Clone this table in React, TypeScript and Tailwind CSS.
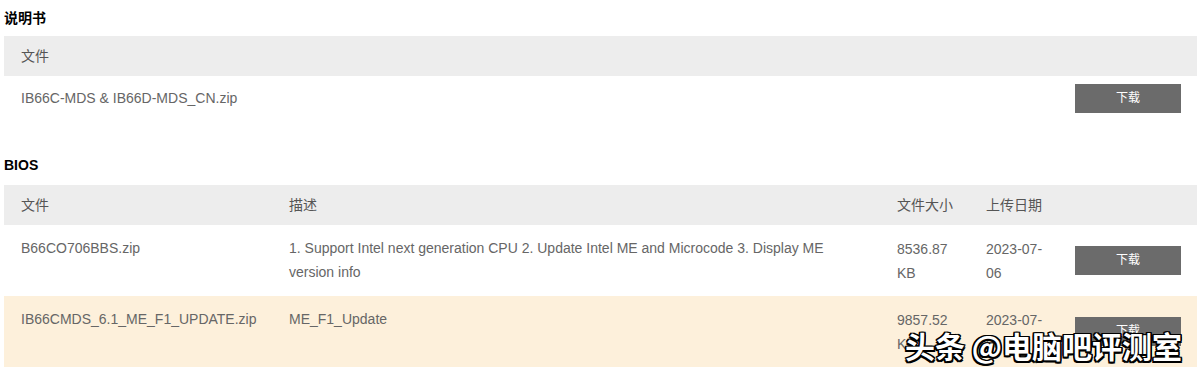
const font = { fontFamily: '"Liberation Sans", Arial, "Noto Sans CJK SC", sans-serif' }

function DownloadButton() {
  return (
    <button className="w-[106px] h-[29px] bg-[#6b6b6b] text-white text-[12px] leading-[29px]">下载</button>
  )
}

interface BiosRow {
  file: string
  desc: string
  size: string
  date: string
  highlight?: boolean
}

const biosRows: BiosRow[] = [
  {
    file: 'B66CO706BBS.zip',
    desc: '1. Support Intel next generation CPU 2. Update Intel ME and Microcode 3. Display ME version info',
    size: '8536.87 KB',
    date: '2023-07-06',
  },
  {
    file: 'IB66CMDS_6.1_ME_F1_UPDATE.zip',
    desc: 'ME_F1_Update',
    size: '9857.52 KB',
    date: '2023-07-06',
    highlight: true,
  },
]

const cols = 'grid grid-cols-[268px_608px_89px_89px_1fr]'

export default function App() {
  return (
    <div className="relative w-[1200px] h-[372px] overflow-hidden bg-white text-[14px] text-[#666]" style={font}>
      <div className="pl-[4px] pr-[3px]">
        <h2 className="pt-[9px] h-[36px] text-[14px] leading-[18px] font-bold text-black">说明书</h2>
        <div className="flex items-center h-[40px] bg-[#ededed] px-[17px] text-[#555]">文件</div>
        <div className="flex items-center h-[44px]">
          <div className="flex-1 px-[17px] leading-[24px]">IB66C-MDS &amp; IB66D-MDS_CN.zip</div>
          <div className="w-[139px] pl-[17px]">
            <DownloadButton />
          </div>
        </div>

        <h2 className="pt-[36px] h-[65px] text-[14px] leading-[18px] font-bold text-black">BIOS</h2>
        <div className={`${cols} h-[40px] items-center bg-[#ededed] text-[#555] whitespace-nowrap`}>
          <div className="pl-[17px]">文件</div>
          <div className="pl-[17px]">描述</div>
          <div className="pl-[17px]">文件大小</div>
          <div className="pl-[17px]">上传日期</div>
          <div />
        </div>
        {biosRows.map((r, i) => (
          <div
            key={i}
            className={`${cols} items-center h-[71px] leading-[24px] ${r.highlight ? 'bg-[#fdf0db]' : ''}`}
          >
            <div className="px-[17px] self-start pt-[11px]">{r.file}</div>
            <div className="px-[17px] self-start pt-[11px]">{r.desc}</div>
            <div className="pl-[17px] whitespace-nowrap">
              {r.size.split(' ')[0]}
              <br />
              {r.size.split(' ')[1]}
            </div>
            <div className="pl-[17px] whitespace-nowrap">
              {r.date.slice(0, 8)}
              <br />
              {r.date.slice(8)}
            </div>
            <div className="pl-[17px]">
              <DownloadButton />
            </div>
          </div>
        ))}
      </div>

      <div
        className="absolute left-[905px] top-[326px] text-[30px] leading-[38px] text-white font-bold whitespace-nowrap"
        style={{
          fontFamily: '"Noto Sans CJK SC", sans-serif',
          textShadow:
            '-1.5px -1.5px 0 #000, 1.5px -1.5px 0 #000, -1.5px 1.5px 0 #000, 1.5px 1.5px 0 #000, 0 1.5px 0 #000, 0 -1.5px 0 #000, 1.5px 0 0 #000, -1.5px 0 0 #000',
        }}
      >
        头条 @电脑吧评测室
      </div>
    </div>
  )
}
